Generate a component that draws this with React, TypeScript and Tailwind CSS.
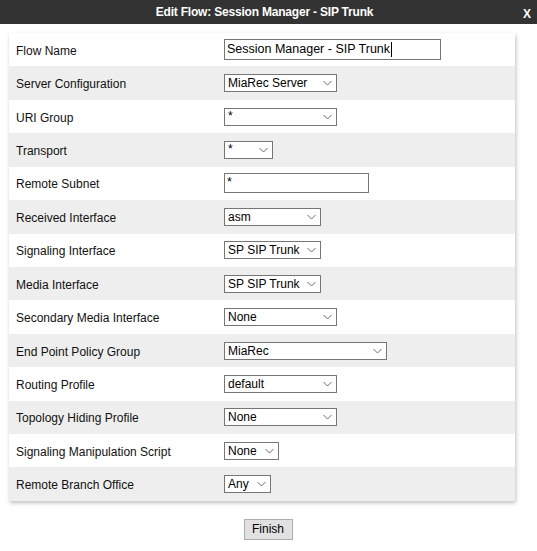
import React from 'react';

type Row = {
  label: string;
  kind: 'input' | 'select';
  value: string;
  width: number;
  height?: number;
};

const rows: Row[] = [
  { label: 'Flow Name', kind: 'input', value: 'Session Manager - SIP Trunk', width: 217, height: 21 },
  { label: 'Server Configuration', kind: 'select', value: 'MiaRec Server', width: 113 },
  { label: 'URI Group', kind: 'select', value: '*', width: 113 },
  { label: 'Transport', kind: 'select', value: '*', width: 49 },
  { label: 'Remote Subnet', kind: 'input', value: '*', width: 145, height: 20 },
  { label: 'Received Interface', kind: 'select', value: 'asm', width: 97 },
  { label: 'Signaling Interface', kind: 'select', value: 'SP SIP Trunk', width: 97 },
  { label: 'Media Interface', kind: 'select', value: 'SP SIP Trunk', width: 97 },
  { label: 'Secondary Media Interface', kind: 'select', value: 'None', width: 113 },
  { label: 'End Point Policy Group', kind: 'select', value: 'MiaRec', width: 163 },
  { label: 'Routing Profile', kind: 'select', value: 'default', width: 113 },
  { label: 'Topology Hiding Profile', kind: 'select', value: 'None', width: 113 },
  { label: 'Signaling Manipulation Script', kind: 'select', value: 'None', width: 55 },
  { label: 'Remote Branch Office', kind: 'select', value: 'Any', width: 47 },
];

const Chevron = () => (
  <svg width="9" height="6" viewBox="0 0 9 6" className="shrink-0">
    <path d="M0.5 1 L4.5 5 L8.5 1" fill="none" stroke="#6b6b6b" strokeWidth="1" />
  </svg>
);

const Field: React.FC<{ row: Row }> = ({ row }) => {
  if (row.kind === 'input') {
    return (
      <div
        className="flex items-center border border-[#767676] bg-white pl-[2px] text-[12.5px] text-black"
        style={{ width: row.width, height: row.height }}
      >
        <span className={row.value === '*' ? 'self-start pt-[2px] leading-none' : 'leading-none'}>{row.value}</span>
        {row.label === 'Flow Name' && <span className="ml-px h-[15px] w-px bg-black" />}
      </div>
    );
  }
  return (
    <div
      className="flex h-[18px] items-center justify-between border border-[#767676] bg-white pl-[3px] pr-[4px] text-[12px] text-black"
      style={{ width: row.width }}
    >
      <span className={row.value === '*' ? 'self-start leading-[14px]' : 'leading-none'}>{row.value}</span>
      <Chevron />
    </div>
  );
};

export default function App() {
  return (
    <div className="h-[551px] w-[537px] bg-white" style={{ fontFamily: '"Liberation Sans", Arial, sans-serif' }}>
      {/* Title bar */}
      <div className="relative flex h-[24px] items-center justify-center bg-[#333333] pr-[8px] text-[12px] font-bold text-white">
        <span className="tracking-[-0.2px]">Edit Flow: Session Manager - SIP Trunk</span>
        <span className="absolute right-[6px] top-[5px] text-[12px]">X</span>
      </div>

      {/* Form panel */}
      <div className="ml-[9px] mt-[9px] w-[506px] shadow-[1px_2px_4px_rgba(0,0,0,0.25)]">
        {rows.map((row, i) => (
          <div
            key={row.label}
            className={`flex h-[33.43px] items-center ${i % 2 === 1 ? 'bg-[#eeeeee]' : 'bg-white'}`}
          >
            <div className="w-[215px] pl-[7px] pt-[2px] text-[12px] text-[#111111]">{row.label}</div>
            <Field row={row} />
          </div>
        ))}
      </div>

      <div className="mt-[18px] flex justify-center pr-[1px]">
        <button className="h-[21px] w-[49px] border border-[#adadad] bg-[#e1e1e1] text-[12px] text-black">
          Finish
        </button>
      </div>
    </div>
  );
}
